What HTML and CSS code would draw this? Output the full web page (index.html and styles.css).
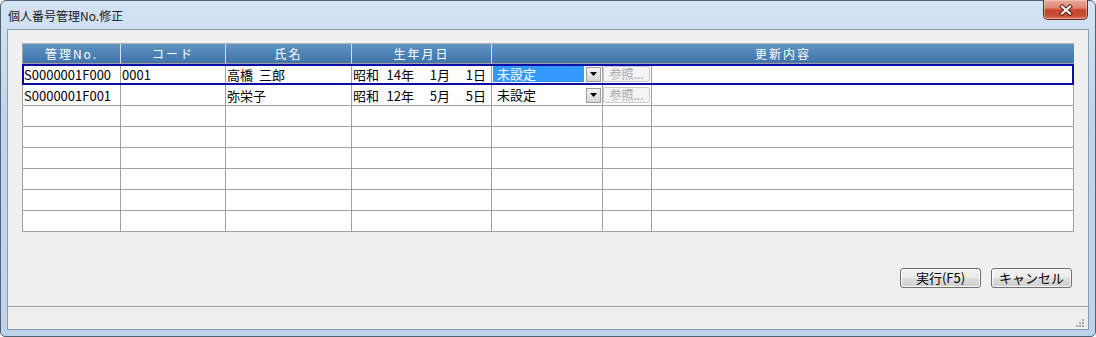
FILE: index.html
```html
<!DOCTYPE html>
<html lang="ja">
<head>
<meta charset="utf-8">
<title>個人番号管理No.修正</title>
<link rel="stylesheet" href="styles.css">
</head>
<body>
<div class="window">
  <div class="titlebar">
    <span class="title">個人番号管理No.修正</span>
    <div class="close">
      <svg width="16" height="12" viewBox="0 0 16 12">
        <path d="M4 2.5 L12 9.5 M12 2.5 L4 9.5" stroke="#5a1a10" stroke-width="4" stroke-linecap="square"/>
        <path d="M4 2.5 L12 9.5 M12 2.5 L4 9.5" stroke="#ffffff" stroke-width="2.2" stroke-linecap="square"/>
      </svg>
    </div>
  </div>
  <div class="client">
    <div class="main">
      <div class="grid">
        <div class="hd">管理No.</div>
        <div class="hd">コード</div>
        <div class="hd">氏名</div>
        <div class="hd">生年月日</div>
        <div class="hd wide">更新内容</div>

        <div class="c">S0000001F000</div>
        <div class="c">0001</div>
        <div class="c">高橋 三郎</div>
        <div class="c date"><span class="era">昭和</span><span class="yy">14年</span><span class="md">1月</span><span class="md">1日</span></div>
        <div class="c combo"><span class="cval selected">未設定</span><span class="dd"><svg width="7" height="4" viewBox="0 0 7 4"><path d="M0 0 H7 L3.5 4 Z" fill="#000"/></svg></span></div>
        <div class="c refcell"><span class="ref">参照...</span></div>
        <div class="c"></div>

        <div class="c">S0000001F001</div>
        <div class="c"></div>
        <div class="c">弥栄子</div>
        <div class="c date"><span class="era">昭和</span><span class="yy">12年</span><span class="md">5月</span><span class="md">5日</span></div>
        <div class="c combo"><span class="cval">未設定</span><span class="dd"><svg width="7" height="4" viewBox="0 0 7 4"><path d="M0 0 H7 L3.5 4 Z" fill="#000"/></svg></span></div>
        <div class="c refcell"><span class="ref">参照...</span></div>
        <div class="c"></div>

        <div class="c"></div><div class="c"></div><div class="c"></div><div class="c"></div><div class="c"></div><div class="c"></div><div class="c"></div>
        <div class="c"></div><div class="c"></div><div class="c"></div><div class="c"></div><div class="c"></div><div class="c"></div><div class="c"></div>
        <div class="c"></div><div class="c"></div><div class="c"></div><div class="c"></div><div class="c"></div><div class="c"></div><div class="c"></div>
        <div class="c"></div><div class="c"></div><div class="c"></div><div class="c"></div><div class="c"></div><div class="c"></div><div class="c"></div>
        <div class="c"></div><div class="c"></div><div class="c"></div><div class="c"></div><div class="c"></div><div class="c"></div><div class="c"></div>
        <div class="c"></div><div class="c"></div><div class="c"></div><div class="c"></div><div class="c"></div><div class="c"></div><div class="c"></div>

        <div class="sel"></div>
      </div>
      <div class="actions">
        <button class="btn">実行(F5)</button>
        <button class="btn">キャンセル</button>
      </div>
    </div>
    <div class="status">
      <svg class="grip" width="10" height="10" viewBox="0 0 10 10">
        <g fill="#a8a8a8">
          <rect x="7" y="1" width="2" height="2"/>
          <rect x="4" y="4" width="2" height="2"/><rect x="7" y="4" width="2" height="2"/>
          <rect x="1" y="7" width="2" height="2"/><rect x="4" y="7" width="2" height="2"/><rect x="7" y="7" width="2" height="2"/>
        </g>
      </svg>
    </div>
  </div>
</div>
</body>
</html>
```

FILE: styles.css
```css
* { box-sizing: border-box; }

body {
  margin: 0;
  font-family: "Noto Sans CJK JP", sans-serif;
  background: #ffffff;
}

.window {
  width: 1096px;
  height: 337px;
  border: 1px solid #4f6276;
  border-radius: 6px 6px 5px 5px;
  background: linear-gradient(to bottom, #d3e3f4 0%, #c2d7ee 30%, #bcd3eb 100%);
  padding: 0 6px 6px 6px;
  display: flex;
  flex-direction: column;
}

.titlebar {
  height: 28px;
  display: flex;
  align-items: flex-start;
  justify-content: space-between;
}

.title {
  font-size: 12px;
  line-height: 16px;
  margin: 7px 0 0 1px;
  color: #1a1a1a;
}

.close {
  width: 45px;
  height: 20px;
  margin-top: -1px;
  margin-right: 1px;
  border: 1px solid #6e2a1d;
  border-top: none;
  border-radius: 0 0 5px 5px;
  background: linear-gradient(to bottom, #e9ab9c 0%, #dc8570 42%, #c8462d 52%, #c84d31 80%, #d9775c 100%);
  display: flex;
  align-items: center;
  justify-content: center;
  box-shadow: inset 0 0 0 1px rgba(255, 220, 210, 0.45);
}

.client {
  flex: 1;
  background: #f0f0f0;
  border: 1px solid #8b9cb0;
  display: flex;
  flex-direction: column;
}

.main {
  flex: 1;
  padding: 13px 0 0 14px;
  display: flex;
  flex-direction: column;
}

.grid {
  position: relative;
  width: 1052px;
  display: grid;
  grid-template-columns: 98px 105px 126px 140px 111px 49px 422px;
  grid-template-rows: 20px repeat(8, 21px);
  border-left: 1px solid #a0a0a0;
  border-top: 1px solid #b4b4b4;
  background: #ffffff;
}

.hd {
  background: linear-gradient(to bottom, #6294c4 0%, #4f84b9 45%, #4276ab 100%);
  color: #ffffff;
  font-size: 12px;
  letter-spacing: 2px;
  display: flex;
  align-items: center;
  justify-content: center;
  border-right: 1px solid #d6dee7;
  border-bottom: 1px solid #a0a0a0;
  white-space: nowrap;
}

.hd.wide {
  grid-column: span 3;
  border-right: none;
}

.c {
  border-right: 1px solid #a0a0a0;
  border-bottom: 1px solid #a0a0a0;
  font-size: 13px;
  word-spacing: 3px;
  color: #000000;
  padding: 0 1px;
  display: flex;
  align-items: center;
  white-space: nowrap;
  overflow: hidden;
}

.date span { display: inline-block; }
.date .era { width: 26px; }
.date .yy { width: 35px; text-align: right; }
.date .md { width: 36px; text-align: right; }

.combo { gap: 2px; }

.cval {
  width: 91px;
  height: 16px;
  line-height: 16px;
  padding-left: 4px;
}

.cval.selected {
  background: #3399ff;
  color: #ffffff;
}

.dd {
  width: 15px;
  height: 15px;
  border: 1px solid #9c9c9c;
  background: linear-gradient(to bottom, #f4f4f4 0%, #e4e4e4 50%, #d6d6d6 100%);
  display: flex;
  align-items: center;
  justify-content: center;
}

.refcell { padding: 0; }

.ref {
  width: 47px;
  height: 16px;
  border: 1px solid #cbcbcb;
  border-radius: 2px;
  background: #f4f4f4;
  color: #a6a6a6;
  font-size: 12px;
  line-height: 14px;
  display: flex;
  align-items: center;
  justify-content: center;
}

.sel {
  position: absolute;
  left: -1px;
  right: 0;
  top: 20px;
  height: 21px;
  border: 2px solid #0c0ca8;
  pointer-events: none;
}

.actions {
  display: flex;
  justify-content: flex-end;
  gap: 10px;
  margin-top: 36px;
  padding-right: 16px;
}

.btn {
  width: 81px;
  height: 20px;
  padding: 0;
  border: 1px solid #707070;
  border-radius: 3px;
  background: linear-gradient(to bottom, #f3f3f3 0%, #ebebeb 48%, #dddddd 52%, #cfcfcf 100%);
  box-shadow: inset 0 0 0 1px #fbfbfb;
  font-family: "Noto Sans CJK JP", sans-serif;
  font-size: 13px;
  line-height: 16px;
  color: #000000;
}

.status {
  height: 23px;
  border-top: 1px solid #a0a0a0;
  background: #f0eeec;
  display: flex;
  justify-content: flex-end;
  align-items: flex-end;
  padding: 0 3px 1px 0;
}
```
